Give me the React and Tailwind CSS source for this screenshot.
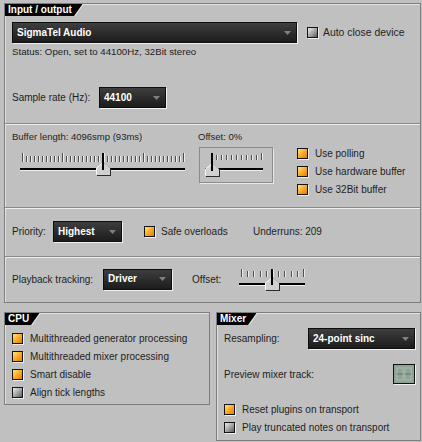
import React from 'react';

const Tab = ({ children }) => (
    <div className="flex h-[12px] self-start">
        <div className="bg-black text-white font-bold text-[10px] leading-[12px] pl-[3px] pr-[2px]">{children}</div>
        <svg width="11" height="12" className="block">
            <polygon points="0,0 8.5,0 0,12" fill="#000" />
            <line x1="9.5" y1="0" x2="1" y2="12" stroke="#e6e6e6" strokeWidth="1" />
        </svg>
    </div>
);

const Panel = ({ className, children }) => (
    <div className={`border border-[#7d7d7d] shadow-[inset_1px_1px_0_#e2e2e2] flex flex-col ${className}`}>
        {children}
    </div>
);

const Sep = () => <div className="h-[2px] border-t border-[#8a8a8a] bg-[#eeeeee]" />;

const Drop = ({ w, label }) => (
    <div className={`${w} h-[21px] shrink-0 flex items-center justify-between border border-[#0d0d0d] bg-[linear-gradient(to_bottom,#3e3e3e,#1c1c1c)] shadow-[1px_1px_0_#f2f2f2] pl-[4px] pr-[5px]`}>
        <span className="text-white font-bold text-[10px] leading-none">{label}</span>
        <svg width="7" height="4" className="block">
            <polygon points="0,0 7,0 3.5,4" fill="#808080" />
        </svg>
    </div>
);

const Check = ({ on }) => (
    <div
        className={`w-[11px] h-[11px] shrink-0 border border-[#141414] shadow-[1px_1px_0_#f0f0f0] ${
            on
                ? 'bg-[linear-gradient(135deg,#ffe58a_0%,#fbb12a_45%,#e57f00_100%)]'
                : 'bg-[linear-gradient(135deg,#eeeeee_0%,#a8a8a8_50%,#5a5a5a_100%)]'
        }`}
    />
);

const Row = ({ on, children }) => (
    <div className="h-[18px] flex items-center gap-[7px] text-[10px]">
        <Check on={on} />
        <span>{children}</span>
    </div>
);

const Slider = ({ w, h, n, x0, step, tallEvery, tall, top, bot, trackY, tx1, tx2, cx, ty, className }) => {
    const ticks = [];
    for (let i = 0; i < n; i++) {
        const x = Math.round(x0 + i * step) + 0.5;
        const isTall = i % tallEvery === 0;
        ticks.push(
            <g key={i}>
                <line x1={x} y1={isTall ? tall : top} x2={x} y2={bot} stroke="#4e4e4e" />
                <line x1={x + 1} y1={isTall ? tall : top} x2={x + 1} y2={bot} stroke="#ececec" />
            </g>
        );
    }
    const thumb = (dx, dy) =>
        [
            [cx - 7, ty + 6],
            [cx, ty],
            [cx + 7, ty + 6],
            [cx + 7, ty + 13],
            [cx - 7, ty + 13],
        ]
            .map(([a, b]) => `${a + dx},${b + dy}`)
            .join(' ');
    return (
        <svg width={w} height={h} className={`block shrink-0 ${className}`}>
            {ticks}
            <rect x={tx1} y={trackY} width={tx2 - tx1} height="2" fill="#000" />
            <rect x={tx1} y={trackY + 2} width={tx2 - tx1} height="1" fill="#eeeeee" />
            <polygon points={thumb(1, 1)} fill="#2c2c2c" />
            <polygon points={thumb(0, 0)} fill="#d0d0d0" />
            <polyline
                points={`${cx - 6.5},${ty + 12.5} ${cx - 6.5},${ty + 6.2} ${cx},${ty + 0.8}`}
                fill="none"
                stroke="#fafafa"
            />
            <rect x={cx - 1} y={tall} width="2" height={ty + 8 - tall} fill="#000" />
        </svg>
    );
};

const Display = () => (
    <div className="w-[22px] h-[20px] border border-[#111] shadow-[1px_1px_0_#f0f0f0] bg-[#8ea494]">
        <svg width="20" height="18" className="block">
            {[3, 11].map((x) => (
                <g key={x} stroke="#a6baab" strokeWidth="1.2" fill="none">
                    <rect x={x} y="3" width="6" height="12" />
                    <line x1={x} y1="9" x2={x + 6} y2="9" stroke="#6f8577" strokeWidth="1.4" />
                </g>
            ))}
        </svg>
    </div>
);

export default function App() {
    return (
        <div className="w-[422px] h-[442px] bg-[#c0c0c0] font-['Liberation_Sans',Arial,sans-serif] text-[#1e1e1e] pt-[3px] pl-[4px] pr-[1px] overflow-hidden">
            <Panel className="h-[300px]">
                {/* input / output */}
                <div className="h-[119px] flex flex-col">
                    <Tab>Input / output</Tab>
                    <div className="flex items-center mt-[6px] pl-[7px]">
                        <Drop w="w-[285px]" label="SigmaTel Audio" />
                        <div className="ml-[10px]">
                            <Check />
                        </div>
                        <span className="ml-[5px] text-[10.4px]">Auto close device</span>
                    </div>
                    <div className="mt-[3px] pl-[7px] text-[9.7px] leading-[12px]">
                        Status: Open, set to 44100Hz, 32Bit stereo
                    </div>
                    <div className="mt-[29px] pl-[7px] flex items-center">
                        <span className="w-[87px] text-[10px]">Sample rate (Hz):</span>
                        <Drop w="w-[67px]" label="44100" />
                    </div>
                </div>
                <Sep />
                {/* buffer */}
                <div className="h-[82px] flex pl-[7px] pt-[6px]">
                    <div className="w-[186px] flex flex-col">
                        <div className="h-[12px] leading-[12px] text-[9.5px]">Buffer length: 4096smp (93ms)</div>
                        <Slider
                            className="ml-[5px] mt-[7px]"
                            w={172}
                            h={28}
                            n={41}
                            x0={5}
                            step={4.025}
                            tallEvery={10}
                            tall={3}
                            top={6}
                            bot={12}
                            trackY={18}
                            tx1={3}
                            tx2={168}
                            cx={86}
                            ty={12}
                        />
                    </div>
                    <div className="w-[75px] flex flex-col">
                        <div className="h-[12px] leading-[12px] text-[9.5px]">Offset: 0%</div>
                        <div className="mt-[4px] ml-[1px] w-[74px] h-[36px] border border-[#8c8c8c] shadow-[1px_1px_0_#e8e8e8]">
                            <Slider
                                className=""
                                w={72}
                                h={34}
                                n={11}
                                x0={11}
                                step={5}
                                tallEvery={10}
                                tall={5}
                                top={7}
                                bot={12}
                                trackY={20}
                                tx1={5}
                                tx2={63}
                                cx={12}
                                ty={15}
                            />
                        </div>
                    </div>
                    <div className="ml-[24px] mt-[13px] flex flex-col">
                        <Row on>Use polling</Row>
                        <Row on>Use hardware buffer</Row>
                        <Row on>Use 32Bit buffer</Row>
                    </div>
                </div>
                <Sep />
                {/* priority */}
                <div className="h-[47px] flex items-center pl-[7px] pb-[2px] text-[10px]">
                    <span className="w-[41px]">Priority:</span>
                    <Drop w="w-[69px]" label="Highest" />
                    <div className="ml-[22px]">
                        <Check on />
                    </div>
                    <span className="ml-[6px] w-[92px]">Safe overloads</span>
                    <span>Underruns: 209</span>
                </div>
                <Sep />
                {/* playback tracking */}
                <div className="h-[44px] flex items-center pl-[7px] pb-[2px] text-[10px]">
                    <span className="w-[91px]">Playback tracking:</span>
                    <Drop w="w-[69px]" label="Driver" />
                    <span className="ml-[20px] w-[44px]">Offset:</span>
                    <Slider
                        className=""
                        w={72}
                        h={28}
                        n={11}
                        x0={5}
                        step={6.2}
                        tallEvery={5}
                        tall={4}
                        top={6}
                        bot={12}
                        trackY={18}
                        tx1={3}
                        tx2={69}
                        cx={36}
                        ty={12}
                    />
                </div>
            </Panel>

            <div className="flex items-start gap-[6px] mt-[9px]">
                <Panel className="w-[206px] h-[93px]">
                    <Tab>CPU</Tab>
                    <div className="mt-[4px] pl-[7px] flex flex-col">
                        <Row on>Multithreaded generator processing</Row>
                        <Row on>Multithreaded mixer processing</Row>
                        <Row on>Smart disable</Row>
                        <Row>Align tick lengths</Row>
                    </div>
                </Panel>
                <Panel className="w-[205px] h-[129px]">
                    <Tab>Mixer</Tab>
                    <div className="mt-[3px] pl-[7px] flex items-center text-[10px]">
                        <span className="w-[84px]">Resampling:</span>
                        <Drop w="w-[107px]" label="24-point sinc" />
                    </div>
                    <div className="mt-[15px] pl-[7px] flex items-center text-[10px]">
                        <span className="w-[169px]">Preview mixer track:</span>
                        <Display />
                    </div>
                    <div className="mt-[16px] pl-[7px] flex flex-col">
                        <Row on>Reset plugins on transport</Row>
                        <Row>Play truncated notes on transport</Row>
                    </div>
                </Panel>
            </div>
        </div>
    );
}
